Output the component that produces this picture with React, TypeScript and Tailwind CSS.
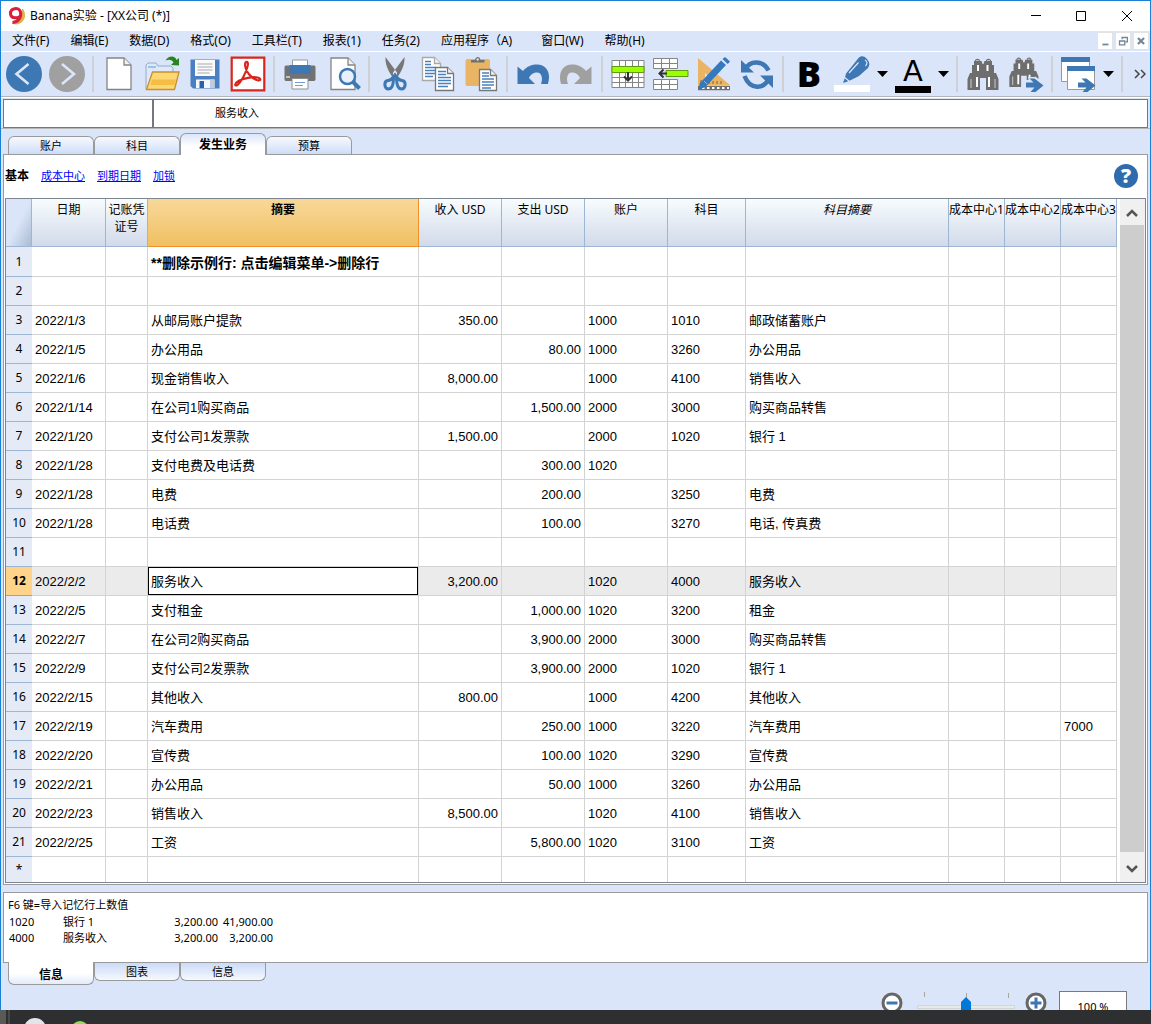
import type { ReactNode } from 'react';

const UI = "font-['Noto_Sans','Noto_Sans_CJK_SC',sans-serif]";

const menus = ['文件(F)', '编辑(E)', '数据(D)', '格式(O)', '工具栏(T)', '报表(1)', '任务(2)', '应用程序（A)', '窗口(W)', '帮助(H)'];

type Row = { n: string; date?: string; text?: string; income?: string; expense?: string; acc?: string; cat?: string; catText?: string; cc3?: string };

const rows: Row[] = [
  { n: '1', text: '**删除示例行: 点击编辑菜单->删除行' },
  { n: '2' },
  { n: '3', date: '2022/1/3', text: '从邮局账户提款', income: '350.00', acc: '1000', cat: '1010', catText: '邮政储蓄账户' },
  { n: '4', date: '2022/1/5', text: '办公用品', expense: '80.00', acc: '1000', cat: '3260', catText: '办公用品' },
  { n: '5', date: '2022/1/6', text: '现金销售收入', income: '8,000.00', acc: '1000', cat: '4100', catText: '销售收入' },
  { n: '6', date: '2022/1/14', text: '在公司1购买商品', expense: '1,500.00', acc: '2000', cat: '3000', catText: '购买商品转售' },
  { n: '7', date: '2022/1/20', text: '支付公司1发票款', income: '1,500.00', acc: '2000', cat: '1020', catText: '银行 1' },
  { n: '8', date: '2022/1/28', text: '支付电费及电话费', expense: '300.00', acc: '1020' },
  { n: '9', date: '2022/1/28', text: '电费', expense: '200.00', cat: '3250', catText: '电费' },
  { n: '10', date: '2022/1/28', text: '电话费', expense: '100.00', cat: '3270', catText: '电话, 传真费' },
  { n: '11' },
  { n: '12', date: '2022/2/2', text: '服务收入', income: '3,200.00', acc: '1020', cat: '4000', catText: '服务收入' },
  { n: '13', date: '2022/2/5', text: '支付租金', expense: '1,000.00', acc: '1020', cat: '3200', catText: '租金' },
  { n: '14', date: '2022/2/7', text: '在公司2购买商品', expense: '3,900.00', acc: '2000', cat: '3000', catText: '购买商品转售' },
  { n: '15', date: '2022/2/9', text: '支付公司2发票款', expense: '3,900.00', acc: '2000', cat: '1020', catText: '银行 1' },
  { n: '16', date: '2022/2/15', text: '其他收入', income: '800.00', acc: '1000', cat: '4200', catText: '其他收入' },
  { n: '17', date: '2022/2/19', text: '汽车费用', expense: '250.00', acc: '1000', cat: '3220', catText: '汽车费用', cc3: '7000' },
  { n: '18', date: '2022/2/20', text: '宣传费', expense: '100.00', acc: '1020', cat: '3290', catText: '宣传费' },
  { n: '19', date: '2022/2/21', text: '办公用品', expense: '50.00', acc: '1000', cat: '3260', catText: '办公用品' },
  { n: '20', date: '2022/2/23', text: '销售收入', income: '8,500.00', acc: '1020', cat: '4100', catText: '销售收入' },
  { n: '21', date: '2022/2/25', text: '工资', expense: '5,800.00', acc: '1020', cat: '3100', catText: '工资' },
  { n: '*' },
];

const headers = ['日期', '记账凭证号', '摘要', '收入 USD', '支出 USD', '账户', '科目', '科目摘要', '成本中心1', '成本中心2', '成本中心3'];

const BLUE = '#3d78b4';
const GRAY = '#a0a0a0';
const DARK = '#6e6e6e';

function Tool({ label, children }: { label: string; children: ReactNode }) {
  return (
    <button aria-label={label} className="size-9 shrink-0">
      <svg viewBox="0 0 36 36" className="size-9" fill="none">{children}</svg>
    </button>
  );
}
const Sep = () => <span className="h-9 w-0.5 shrink-0 bg-[#cfd0d4]" />;
const Drop = ({ label }: { label: string }) => (
  <button aria-label={label} className="w-[11px] shrink-0">
    <svg viewBox="0 0 11 6" className="h-1.5 w-[11px]"><path d="M0 0h11L5.5 6z" fill="#000" /></svg>
  </button>
);

function Sheet({ x, y, w, h, f, stroke = '#858585' }: { x: number; y: number; w: number; h: number; f: number; stroke?: string }) {
  return (
    <g stroke={stroke} strokeWidth="1.3">
      <path d={`M${x} ${y}h${w - f}l${f} ${f}v${h - f}h${-w}z`} fill="#fff" />
      <path d={`M${x + w - f} ${y}v${f}h${f}`} fill="#f2f2f2" />
    </g>
  );
}

function TextLines({ x, y, w }: { x: number; y: number; w: number }) {
  return <path d={`M${x} ${y}h${w - 5}M${x} ${y + 3}h${w - 5}M${x} ${y + 6}h${w}M${x} ${y + 9}h${w}M${x} ${y + 12}h${w}M${x} ${y + 15}h${w - 3}`} stroke="#4a80bb" strokeWidth="1.4" />;
}

function Binoculars() {
  return (
    <g>
      <path d="M10 5c0-3 5-3 5 0h1.5l1 3h1l1-3H21c0-3 5-3 5 0h1v4h2v8h2l2.5 6v11H21V22h-6v12H2.500V23L5 17h2V9h2V5z" fill={DARK} />
      <path d="M13 9v6M22.500 9v6M12 21v10M24 21v10" stroke="#fff" strokeWidth="2" />
      <path d="M11 4.500h3M22 4.500h3M6 23v9M30 23v9" stroke="#bdbdbd" strokeWidth="1.200" />
    </g>
  );
}
const GoArrow = () => <path d="M18 26.500h7.500L21.500 22.500h5L35.500 29.500l-8 6.500h-5l4-4.500H18z" fill={BLUE} />;

function Toolbar() {
  return (
    <div className="flex h-11 items-center gap-[7px] pl-[5px]">
      <Tool label="后退"><circle cx="18" cy="18" r="18" fill={BLUE} /><path d="M22.500 8L10.500 18l12 10" stroke="#dbe6fa" strokeWidth="2.600" /></Tool>
      <Tool label="前进"><circle cx="18" cy="18" r="18" fill={GRAY} /><path d="M13 8l12 10-12 10" stroke="#dbe6fa" strokeWidth="2.600" /></Tool>
      <Sep />
      <Tool label="新建"><Sheet x={6} y={2} w={24} h={31.5} f={7} /></Tool>
      <Tool label="打开">
        <path d="M2 33V9l2-2h8l2 3h13l2 2v21z" fill="#dce9fb" stroke="#98a9c0" />
        <path d="M4 11h8" stroke="#7fb7ef" strokeWidth="1.500" />
        <path d="M8.500 16H35l-4.500 17.500H2.500z" fill="#fbd873" stroke="#c98f2e" strokeWidth="1.300" />
        <path d="M8 23.500h24l-1.500 5.500H6.500z" fill="#f5bd43" />
        <path d="M21.500 4.500c3-5.500 10-5 11-.5l2.500-2V9.500L27 9l2.500-2.500C28 3.500 25 3 21.500 4.500z" fill="#28841f" />
      </Tool>
      <Tool label="保存">
        <path d="M3.500 3.500h29v29H6l-2.500-2.500z" fill="#4a80c2" /><path d="M8 4h20v16H8z" fill="#fafafa" />
        <path d="M10.500 8h15M10.500 11h15M10.500 14h15M10.500 17h12" stroke="#a9a9a9" />
        <path d="M9 23.500h18.500V32H9z" fill="#f4f7fc" /><path d="M12.500 25h4.500v7h-4.500z" fill="#2c61a8" /><path d="M23 23.500h4.500V32H23z" fill="#c3cbd8" />
      </Tool>
      <Tool label="PDF">
        <path d="M1.700 1.700h32.600v32.600H1.700z" fill="#fff" stroke="#d9261d" strokeWidth="2.200" />
        <path d="M15.500 6.500c2-2 3 .5 2 4C15.500 18 11 26 7.500 29c-3 1.500-3.500-1.500 1-4 5-2.700 14-4.500 19-3.500 4 1 3.500 3.500 0 2.700C21 22.500 15.500 15 15 9.500c0-1 0-2.300.5-3z" stroke="#d9261d" strokeWidth="2.200" />
      </Tool>
      <Sep />
      <Tool label="打印">
        <path d="M2.500 11c0-1 1-1.500 2-1.500h27c1.500 0 2 .5 2 1.500v12c0 1.500-1 2-2 2h-27c-1.500 0-2-.5-2-2z" fill="#727272" />
        <path d="M10.500 4h15v7h-15z" fill="#fff" stroke="#999" /><path d="M7.500 9h21v7.500c0 1-1 1.500-2 1.500h-17c-1 0-2-.5-2-1.500z" fill={BLUE} />
        <path d="M10 22.500h16V33H10z" fill="#fff" stroke="#8e8e8e" /><path d="M13 26.500h10M13 29.500h8" stroke="#6f9fd0" /><path d="M4 21h4" stroke="#ddd" strokeWidth="1.500" />
      </Tool>
      <Tool label="打印预览">
        <Sheet x={6} y={2} w={24} h={31.5} f={7} /><circle cx="22.500" cy="20.500" r="7.500" fill="#e9f0fb" stroke={BLUE} strokeWidth="2.500" />
        <path d="M28 26l6.500 6.500" stroke={BLUE} strokeWidth="4" />
      </Tool>
      <Sep />
      <Tool label="剪切">
        <path d="M8.500 1L20 16.500v5l-3.500 1C11 15 8 8 8.500 1zM27.500 1L16 16.500v5l3.500 1C25 15 28 8 27.500 1z" fill="#777" />
        <path d="M16.500 21c0 5-.5 12-5 12-4.500 0-5-8-.5-8.500 2.500-.2 4-1.500 5.500-3.500zM19.500 21c0 5 .5 12 5 12 4.500 0 5-8 .5-8.500-2.500-.2-4-1.500-5.500-3.500z" stroke={BLUE} strokeWidth="3" />
      </Tool>
      <Tool label="复制">
        <Sheet x={2.5} y={1.5} w={18} h={23} f={6} stroke="#a9a9a9" /><TextLines x={5} y={5.5} w={11} />
        <Sheet x={15.5} y={11.5} w={18} h={23} f={6} stroke="#777" /><TextLines x={18} y={15.5} w={13} />
      </Tool>
      <Tool label="粘贴">
        <path d="M2.500 5c0-1 .5-2 2-2H25c1.500 0 2 1 2 2v25H4.500c-1.500 0-2-1-2-2z" fill="#e9b565" />
        <path d="M8 6.500V4h4c.5-4 5-4 5.500 0h4v2.500z" fill="#707070" /><circle cx="14.700" cy="3.500" r="1.200" fill="#ddd" />
        <Sheet x={16.5} y={13.5} w={17} h={21} f={6} stroke="#777" /><TextLines x={19} y={17} w={12} />
      </Tool>
      <Sep />
      <Tool label="撤销"><path d="M2.500 10.500L8 15c4-5 9-6.500 14-6.500 8 0 12 6 12 12.500 0 3-1 7-1 7h-7c2-5 1-11.500-4-11.500-4 0-7 2.500-8 5.500l6 6H2.500z" fill={BLUE} /></Tool>
      <Tool label="重做"><path d="M33.500 10.500L28 15c-4-5-9-6.500-14-6.500C6 8.500 2 14.500 2 21c0 3 1 7 1 7h7C8 23 9 16.500 14 16.500c4 0 7 2.500 8 5.500l-6 6h17.500z" fill={GRAY} /></Tool>
      <Sep />
      <Tool label="插入行">
        <path d="M2 4.500h32v27H2zM2 21.500h32M2 26.500h32M9.500 4.500v27M15.500 4.500v27M22.500 4.500v27M28.500 4.500v27" fill="#fff" stroke="#858585" />
        <path d="M2 10.500h32v6H2z" fill="#9bff00" stroke="#5f9916" /><path d="M18 16v8M14 20.500l4 4 4-4" stroke="#333" strokeWidth="2" />
      </Tool>
      <Tool label="删除行">
        <path d="M.5 2.500h24v10H.5zM.5 7.500h24M8.500 2.500v10M16.500 2.500v10M.5 23.500h24v10H.5zM.5 28.500h24M8.500 23.500v10M16.500 23.500v10" fill="#fff" stroke="#858585" />
        <path d="M13 14.500h22v6H13z" fill="#9bff00" stroke="#5f9916" /><path d="M14 17.500H7M10.500 13.500l-4 4 4 4" stroke="#333" strokeWidth="2" />
      </Tool>
      <Tool label="设计">
        <path d="M2 2l32 27H2zM9 17v6h7z" fill="#e9b565" fillRule="evenodd" />
        <path d="M5 28v-4M9 28v-3M13 28v-3M17 28v-3M21 28v-3M25 28v-3" stroke="#806038" />
        <path d="M2 32h32" stroke="#707070" strokeWidth="4.500" /><path d="M6 32h27" stroke="#fff" strokeWidth="2" strokeDasharray="2.500 2.500" />
        <path d="M2 34l2-7L25 4.500l5 4.500L9.500 31z" fill="#3578bd" /><path d="M26.500 3L29 1l5 4.500-2.300 2.500z" fill="#3578bd" /><path d="M8 25l3 3" stroke="#8bb9e8" />
      </Tool>
      <Tool label="重新计算">
        <path d="M6 13.500C11 4 24 4 29.500 14.500M30 22C25 34 11 34 5.500 20" stroke={BLUE} strokeWidth="4.500" />
        <path d="M2 4v12.500h13zM34 32V19.500H21z" fill={BLUE} />
      </Tool>
      <Sep />
      <button aria-label="粗体" className="w-9 shrink-0 text-center font-['Open_Sans',sans-serif] text-[36px] leading-10 font-extrabold">B</button>
      <Tool label="背景颜色">
        <path d="M24.500 2C27-.5 30 0 32.500 2.500 36 6 36 9 34 12l-9 8-7 3.500-4.500 2-4.500 1.500 2-5.500 1-4 4.500-5.500z" fill={BLUE} />
        <path d="M24.500 6.500L15 17M10 21l5 4M31 4c2.500 1.500 2.500 4 .5 6" stroke="#dbe6fa" strokeWidth="1.200" /><path d="M0 29h36v7H0z" fill="#fff" />
      </Tool>
      <Drop label="选择背景颜色" />
      <button aria-label="文字颜色" className="flex w-9 shrink-0 flex-col items-center">
        <span className="font-['DejaVu_Sans',sans-serif] text-[29px] leading-[30px]">A</span>
        <span className="h-[7px] w-9 bg-black" />
      </button>
      <Drop label="选择文字颜色" />
      <Sep />
      <Tool label="查找"><Binoculars /></Tool>
      <Tool label="查找下一个"><g transform="translate(-1 -1) scale(.94)"><Binoculars /></g><path d="M16 24h5l-1-3h8l8 6v9H20l-1-3h-3z" fill="#dbe5f9" /><GoArrow /></Tool>
      <Sep />
      <Tool label="窗口">
        <path d="M1.500 1.500h28v24h-28z" fill="#fff" stroke="#999" /><path d="M1 1h29v5H1z" fill={BLUE} />
        <path d="M7.500 10.500h27v23h-27z" fill="#fff" stroke="#999" /><path d="M7 10h28v5H7z" fill={BLUE} /><GoArrow />
      </Tool>
      <Drop label="选择窗口" />
      <Sep />
      <button aria-label="更多" className="ml-1 shrink-0">
        <svg viewBox="0 0 12 10" className="h-2.5 w-3" fill="none" stroke="#444" strokeWidth="1.500"><path d="M1 1l4 4-4 4M7 1l4 4-4 4" /></svg>
      </button>
    </div>
  );
}

function TopTab({ label, active }: { label: string; active?: boolean }) {
  return active ? (
    <button role="tab" aria-selected className="z-10 -mb-px h-[22px] w-[86px] rounded-t-md border border-b-0 border-[#9a9a9a] bg-linear-to-b from-[#dbe6fa] to-white to-60% text-xs font-bold">{label}</button>
  ) : (
    <button role="tab" aria-selected={false} className="h-[18px] w-[86px] rounded-t-md border border-b-0 border-[#9a9a9a] bg-linear-to-b from-[#f6f9fe] via-[#dfe9fb] via-60% to-[#ccdcf7] text-[11px] leading-4">{label}</button>
  );
}

function BottomTab({ label, active }: { label: string; active?: boolean }) {
  return active ? (
    <button role="tab" aria-selected className="z-10 -mt-px h-[23px] w-[86px] rounded-b-md border border-t-0 border-[#9a9a9a] bg-linear-to-b from-white from-50% to-[#e3ecfc] pt-1 text-xs leading-4 font-bold">{label}</button>
  ) : (
    <button role="tab" aria-selected={false} className="h-[18px] w-[86px] rounded-b-md border border-t-0 border-[#9a9a9a] bg-linear-to-b from-[#ccdcf7] via-[#dfe9fb] to-[#f6f9fe] text-[11px] leading-4">{label}</button>
  );
}

function GridRow({ row }: { row: Row }) {
  const current = row.n === '12';
  const last = row.n === '*';
  const h = row.n === '1' ? 'h-[30px]' : last ? 'h-[25px]' : 'h-[29px]';
  const cell = `border-r border-[#d3d3d3] px-[3px] pt-0.5 pb-0 whitespace-nowrap ${last ? '' : 'border-b'}`;
  return (
    <tr className={`${h} ${current ? 'bg-[#ebebeb]' : ''}`}>
      <th scope="row" className={`${UI} ${last ? '' : 'border-b'} p-0 text-xs leading-4 ${current ? 'border-[#f0902a] bg-[#ffd48a] font-bold' : 'border-[#9db6d3] bg-[#e4ebf7] font-normal'}`}>{row.n}</th>
      <td className={cell}>{row.date}</td>
      <td className={cell} />
      {current ? (
        <td className="border-r border-b border-[#d3d3d3] p-0">
          <input aria-label="摘要" defaultValue={row.text} className="block h-7 w-full border border-black bg-white pb-0.5 pl-0.5 outline-none" />
        </td>
      ) : (
        <td className={`${cell} ${row.n === '1' ? 'text-sm leading-4 font-bold' : ''}`}>{row.text}</td>
      )}
      <td className={`${cell} text-right`}>{row.income}</td>
      <td className={`${cell} text-right`}>{row.expense}</td>
      <td className={cell}>{row.acc}</td>
      <td className={cell}>{row.cat}</td>
      <td className={cell}>{row.catText}</td>
      <td className={cell} />
      <td className={cell} />
      <td className={cell}>{row.cc3}</td>
    </tr>
  );
}

export default function App() {
  return (
    <div className={`${UI} flex min-h-screen flex-col bg-[#2e2f31] text-xs text-black`}>
      <div className="flex flex-col border-x border-t border-[#1a80d5] bg-[#dbe5f9]">
        <header className="flex h-[30px] items-center bg-white pl-1.5">
          <svg viewBox="0 0 20 20" className="size-5" fill="none">
            <path d="M15.500 3c3 4 3 10-1 13-3 2.200-6 2.500-9 1.500 5-.5 9-3 9.500-8 .2-2.500.2-4.500.5-6.500z" fill="#e5b93c" stroke="#c79a35" strokeWidth=".6" />
            <path d="M13.500 9.500c-1 3-9.500 3.500-10-1.500C3 2 12 .5 13.500 6c1 5-1.500 10-8 10.500" stroke="#d81f3c" strokeWidth="3" />
          </svg>
          <h1 className="pl-[3px] text-xs">Banana实验 - [XX公司 (*)]</h1>
          <div className="ml-auto flex">
            <button aria-label="最小化" className="grid h-[30px] w-[45px] place-items-center"><svg viewBox="0 0 10 10" className="size-2.5" stroke="#000"><path d="M0 4.500h10" /></svg></button>
            <button aria-label="最大化" className="grid h-[30px] w-[46px] place-items-center"><svg viewBox="0 0 10 10" className="size-2.5" stroke="#000" fill="none"><path d="M.5.5h9v9h-9z" /></svg></button>
            <button aria-label="关闭" className="grid h-[30px] w-[46px] place-items-center"><svg viewBox="0 0 10 10" className="size-2.5" stroke="#000"><path d="M0 0l10 10M10 0L0 10" /></svg></button>
          </div>
        </header>

        <nav className="flex h-[21px] items-center gap-px border-b border-white pl-px">
          {menus.map((m) => <button key={m} className={`h-5 pl-2.5 whitespace-nowrap ${m.endsWith('（A)') ? 'pr-[18px]' : 'pr-2.5'}`}>{m}</button>)}
          <div className="ml-auto flex gap-0.5 pr-px">
            <button aria-label="最小化文档" className="h-[18px] w-4 border border-[#e3e3e3] bg-white"><svg viewBox="0 0 16 16" className="size-3.5"><path d="M5 11h7v2H5z" fill="#728797" /></svg></button>
            <button aria-label="还原文档" className="h-[18px] w-4 border border-[#e3e3e3] bg-white"><svg viewBox="0 0 16 16" className="size-3.5" fill="none" stroke="#728797" strokeWidth="1.500"><path d="M4 8h6v4.500H4zM7 6V4h6v5h-2" /></svg></button>
            <button aria-label="关闭文档" className="h-[18px] w-4 border border-[#e3e3e3] bg-white"><svg viewBox="0 0 16 16" className="size-3.5" stroke="#728797" strokeWidth="2.500"><path d="M4.500 4.500l7 7M11.500 4.500l-7 7" /></svg></button>
          </div>
        </nav>

        <Toolbar />

        <div className="border-y border-[#b5b5b5]">
          <div className="flex border-t border-white pt-px">
            <div className="mx-0.5 flex h-[29px] grow border border-[#74777d] bg-white text-[11px]">
              <input aria-label="单元格" className="w-[150px] border-r-2 border-[#74777d] outline-none" />
              <input aria-label="内容" defaultValue="服务收入" className="min-w-0 grow pl-[61px] outline-none" />
            </div>
          </div>
        </div>

        <div role="tablist" className="mt-1 flex items-end pl-[7px]">
          <TopTab label="账户" /><TopTab label="科目" /><TopTab label="发生业务" active /><TopTab label="预算" />
        </div>

        <main className="mx-0.5 border border-[#9a9a9a] bg-white p-px">
          <div className="flex h-[42px] items-center gap-3 pr-2 pb-0.5 text-[11px]">
            <span className="text-xs font-bold">基本</span>
            <a href="#cost" className="text-[#0000ff] underline">成本中心</a>
            <a href="#due" className="text-[#0000ff] underline">到期日期</a>
            <a href="#lock" className="text-[#0000ff] underline">加锁</a>
            <button aria-label="帮助" className="ml-auto grid size-6 place-items-center rounded-full bg-[#2e6cae] font-['Open_Sans',sans-serif] text-xl leading-6 font-extrabold text-white">?</button>
          </div>
          <div className="flex border border-[#7d858f]">
            <table className="min-w-0 grow table-fixed border-separate border-spacing-0 font-['Liberation_Sans','Noto_Sans_CJK_SC',sans-serif] text-[13px] leading-4">
              <colgroup>
                <col className="w-[26px]" /><col className="w-[74px]" /><col className="w-[42px]" /><col />
                <col className="w-[83px]" /><col className="w-[83px]" /><col className="w-[83px]" /><col className="w-[78px]" />
                <col className="w-[203px]" /><col className="w-14" /><col className="w-14" /><col className="w-14" />
              </colgroup>
              <thead>
                <tr className={`${UI} h-12 text-xs leading-[17px]`}>
                  <th className="border-r border-b border-[#9db6d3] bg-linear-to-br from-[#dbe5f9] from-50% to-[#a9bcd2] p-0" />
                  {headers.map((h) => (
                    <th
                      key={h}
                      scope="col"
                      className={`border-r border-b px-0 pt-0.5 align-top ${h === '摘要' ? 'border-[#f0902a] bg-linear-to-b from-[#f8d899] to-[#f0c060] font-bold' : 'border-[#9db6d3] bg-linear-to-b from-[#f8fcfe] to-[#d2daea] font-normal'} ${h === '科目摘要' ? 'italic' : ''} ${h.startsWith('成本') ? 'whitespace-nowrap' : ''}`}
                    >
                      {h}
                    </th>
                  ))}
                </tr>
              </thead>
              <tbody>{rows.map((r) => <GridRow key={r.n} row={r} />)}</tbody>
            </table>
            <div className="ml-[3px] flex w-[25px] shrink-0 flex-col bg-[#f0f0f0] pr-px">
              <button aria-label="向上滚动" className="grid h-[26px] place-items-center pt-0.5"><svg viewBox="0 0 12 8" className="h-2 w-3" fill="none" stroke="#555" strokeWidth="2.500"><path d="M1 7l5-5 5 5" /></svg></button>
              <div className="grow bg-[#cdcdcd]" />
              <button aria-label="向下滚动" className="grid h-[30px] place-items-center pt-1"><svg viewBox="0 0 12 8" className="h-2 w-3" fill="none" stroke="#555" strokeWidth="2.500"><path d="M1 1l5 5 5-5" /></svg></button>
            </div>
          </div>
        </main>

        <section className="mx-0.5 mt-[7px] h-[71px] border border-[#9a9a9a] bg-white px-1 pt-1 text-[11px] leading-4">
          <p>F6 键=导入记忆行上数值</p>
          <table className="mt-px w-[265px] table-fixed">
            <tbody>
              <tr><td className="w-[55px] p-0 pl-px">1020</td><td className="p-0">银行 1</td><td className="w-[55px] p-0 text-right">3,200.00</td><td className="w-[55px] p-0 text-right">41,900.00</td></tr>
              <tr><td className="p-0 pl-px">4000</td><td className="p-0">服务收入</td><td className="p-0 text-right">3,200.00</td><td className="p-0 text-right">3,200.00</td></tr>
            </tbody>
          </table>
        </section>

        <div role="tablist" className="flex items-start pl-[7px]">
          <BottomTab label="信息" active /><BottomTab label="图表" /><BottomTab label="信息" />
        </div>

        <footer className="mt-[5px] flex h-5 items-start justify-end overflow-hidden pr-[23px]">
          <button aria-label="缩小" className="mt-0.5"><svg viewBox="0 0 22 22" className="size-[22px]"><circle cx="11" cy="11" r="9" fill="#fff" stroke="#666" strokeWidth="3" /><path d="M5.500 9.500h11v3h-11z" fill={BLUE} /></svg></button>
          <div className="mr-2.5 ml-3.5 w-[98px]">
            <svg viewBox="0 0 98 6" className="mt-0.5 h-1.5 w-[98px]" stroke="#a8a699"><path d="M7.500 0v5M49.500 1v5M91.500 1v5" /></svg>
            <input
              type="range"
              aria-label="缩放"
              defaultValue={50}
              className="block h-4.5 w-full appearance-none bg-transparent [&::-webkit-slider-runnable-track]:h-1 [&::-webkit-slider-runnable-track]:border [&::-webkit-slider-runnable-track]:border-[#d3d5d8] [&::-webkit-slider-runnable-track]:bg-[#e7eaea] [&::-webkit-slider-thumb]:-mt-[9px] [&::-webkit-slider-thumb]:h-5 [&::-webkit-slider-thumb]:w-2.5 [&::-webkit-slider-thumb]:appearance-none [&::-webkit-slider-thumb]:bg-[#0078d7] [&::-webkit-slider-thumb]:[clip-path:polygon(50%_0,100%_25%,100%_100%,0_100%,0_25%)]"
            />
          </div>
          <button aria-label="放大" className="mt-0.5 mr-3"><svg viewBox="0 0 22 22" className="size-[22px]"><circle cx="11" cy="11" r="9" fill="#fff" stroke="#666" strokeWidth="3" /><path d="M5.500 9.500h4v-4h3v4h4v3h-4v4h-3v-4h-4z" fill={BLUE} /></svg></button>
          <input aria-label="缩放比例" defaultValue="100 %" className="mt-px h-[30px] w-[68px] border border-[#7a7a7a] bg-white text-center text-[11px] outline-none" />
        </footer>
      </div>

      <div className="flex h-3.5 overflow-hidden">
        <span className="w-1.5 bg-[#595957]" />
        <span className="ml-0.5 w-0.5 bg-[#484846]" />
        <span className="mt-2 ml-3.5 size-[22px] shrink-0 rounded-full bg-[#e3e5e8]" />
        <span className="mt-[11px] ml-[25px] size-[18px] shrink-0 rounded-full bg-[#8ee04e]" />
      </div>
    </div>
  );
}
